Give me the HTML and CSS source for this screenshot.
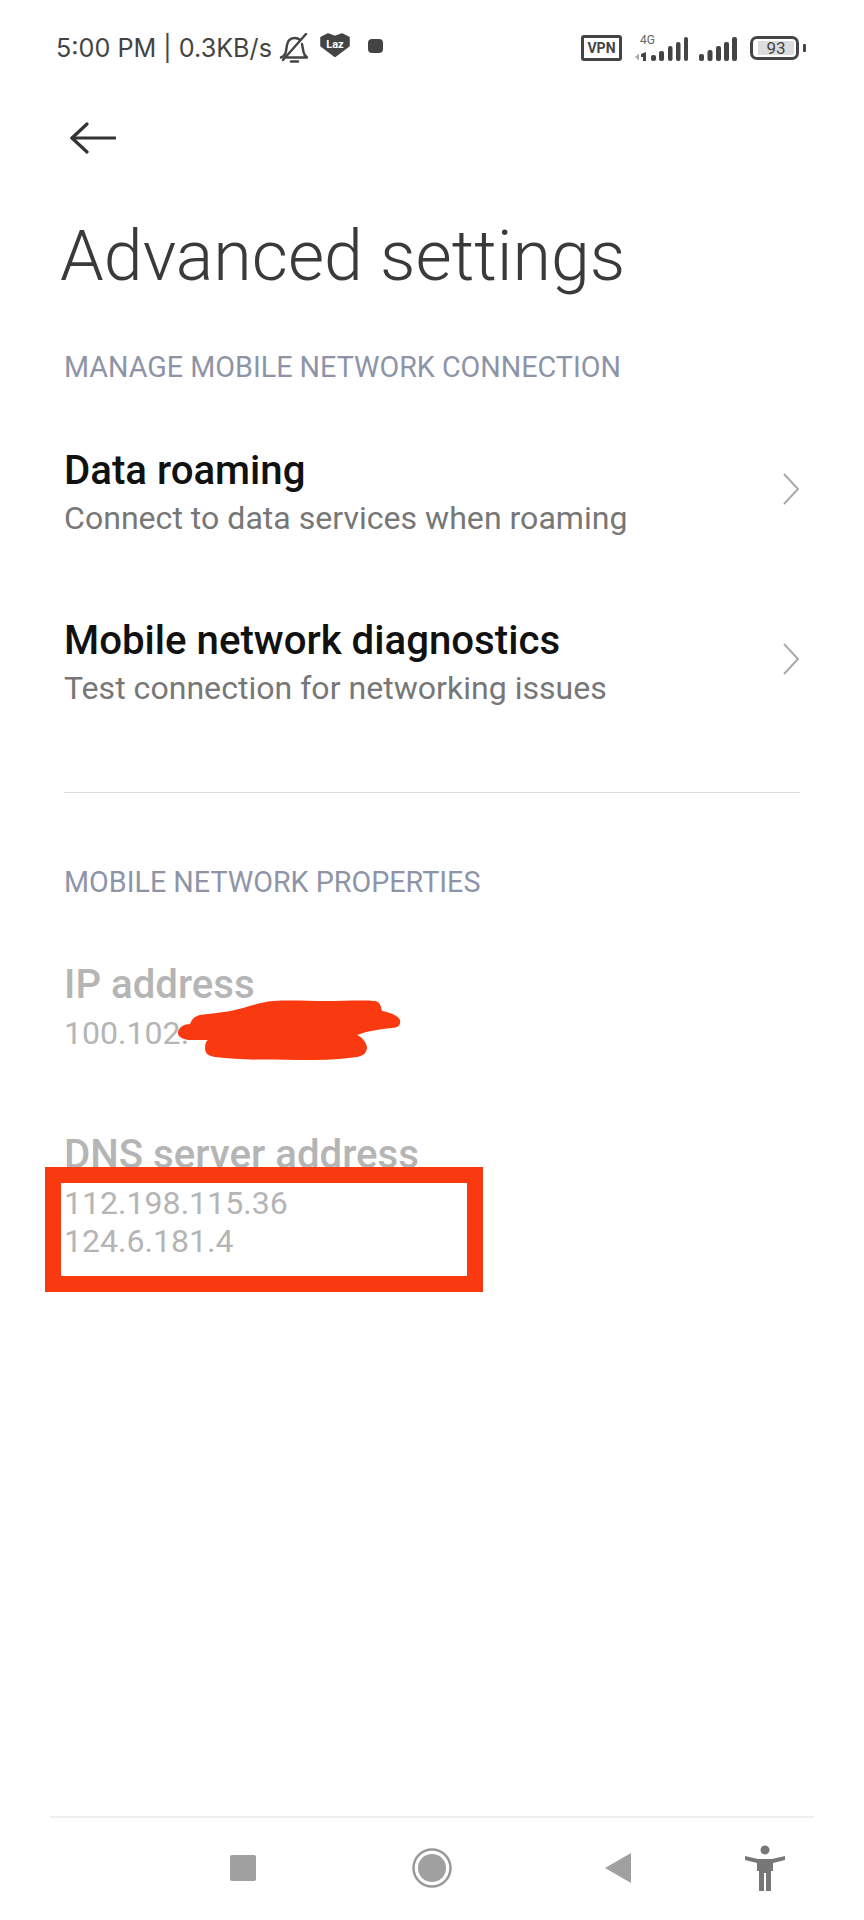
FILE: index.html
```html
<!DOCTYPE html>
<html lang="en">
<head>
  <meta charset="UTF-8">
  <title>Advanced settings</title>
  <link rel="stylesheet" href="styles.css">
</head>
<body>
<div class="screen">

  <div class="status-bar">
    <div class="status-left">
      <span class="status-text">5:00 PM | 0.3KB/s</span>
      <svg class="ic-bell" width="30" height="30" viewBox="0 0 30 30" fill="none" stroke="#444" stroke-width="2.400" stroke-linecap="round" stroke-linejoin="round">
        <path d="M2 24.500c3-1 4.500-3 5-6.500l1-6c.8-4.500 4-7 8-7 2 0 3.500.6 5 1.800"/>
        <path d="M23 11l1.500 8c.4 2 1.500 4 3.500 5.500H8"/>
        <path d="M4 27L27 1"/>
        <path d="M12 28.500h7"/>
      </svg>
      <svg class="ic-laz" width="30" height="24" viewBox="0 0 30 24">
        <path d="M8 1l7 2.500L22 1l7 3.500V13l-14 10.500L1 13V4.500z" fill="#444" stroke="#444" stroke-linejoin="round" stroke-width="1.500"/>
        <text x="15" y="14.500" class="laz-text" text-anchor="middle">Laz</text>
      </svg>
      <span class="ic-dot"></span>
    </div>
    <div class="status-right">
      <span class="vpn">VPN</span>
      <div class="signal-wrap">
        <span class="net-type">4G</span>
        <svg width="53" height="25" viewBox="0 0 53 25" fill="#444">
          <path d="M0 20l4-3.500v7z" fill="#aaa"/>
          <path d="M6 17l5-2v9H8v-4H6z"/>
          <rect x="16" y="18" width="5" height="6" rx="2"/>
          <rect x="24" y="14" width="5" height="10" rx="2"/>
          <rect x="33" y="9" width="4.500" height="15" rx="2"/>
          <rect x="41" y="5" width="4.500" height="19" rx="2"/>
          <rect x="49" y="0" width="4" height="24" rx="2"/>
        </svg>
      </div>
      <svg class="signal-two" width="38" height="25" viewBox="0 0 38 25" fill="#444">
        <rect x="0" y="17" width="5" height="7" rx="2"/>
        <rect x="8.500" y="13" width="5" height="11" rx="2"/>
        <rect x="17" y="9" width="5" height="15" rx="2"/>
        <rect x="25" y="5" width="5" height="19" rx="2"/>
        <rect x="33" y="0" width="5" height="24" rx="2"/>
      </svg>
      <div class="battery"><span class="battery-fill">93</span></div>
      <span class="battery-nub"></span>
    </div>
  </div>

  <svg class="back" width="46" height="32" viewBox="0 0 46 32" fill="none" stroke="#333" stroke-width="3.200" stroke-linecap="round" stroke-linejoin="round">
    <path d="M2 16h43"/>
    <path d="M17 2L2 16l15 14"/>
  </svg>

  <h1 class="page-title">Advanced settings</h1>

  <div class="section-head first">MANAGE MOBILE NETWORK CONNECTION</div>

  <div class="row">
    <div>
      <div class="row-title">Data roaming</div>
      <div class="row-sub">Connect to data services when roaming</div>
    </div>
    <svg class="chevron" width="18" height="32" viewBox="0 0 18 32" fill="none" stroke="#aaa" stroke-width="2"><path d="M2 1l14 15L2 31"/></svg>
  </div>

  <div class="row">
    <div>
      <div class="row-title">Mobile network diagnostics</div>
      <div class="row-sub">Test connection for networking issues</div>
    </div>
    <svg class="chevron" width="18" height="32" viewBox="0 0 18 32" fill="none" stroke="#aaa" stroke-width="2"><path d="M2 1l14 15L2 31"/></svg>
  </div>

  <div class="divider"></div>

  <div class="section-head">MOBILE NETWORK PROPERTIES</div>

  <div class="row disabled">
    <div>
      <div class="row-title">IP address</div>
      <div class="row-sub">100.102.</div>
    </div>
  </div>

  <div class="row disabled">
    <div>
      <div class="row-title">DNS server address</div>
      <div class="row-sub">112.198.115.36<br>124.6.181.4</div>
    </div>
  </div>

  <!-- red marks drawn over the screenshot -->
  <svg class="scribble" width="230" height="66" viewBox="0 0 230 66" fill="#f93a10">
    <path d="M3 34c1-5 6-8 12-8 2-5 5-8 10-9 14-2 30-3 43-7 10-3 20-6 30-7 17-1 35 0 52 0 18 0 38-1 50 0 5 1 6 5 7 10 5 1 15 3 18 9 1 5-2 8-8 8-13 1-24 3-35 7 5 2 9 7 10 12 0 6-4 9-10 10-20 3-40 3-60 3-29 0-58 0-82-3-6-1-10-3-10-9 0-4 1-7 3-8-7 0-14 0-20 0-6-1-11-4-10-8z"/>
  </svg>
  <div class="red-box"></div>

  <div class="nav-bar">
    <span class="nav-square"></span>
    <svg class="nav-home" width="40" height="40" viewBox="0 0 40 40"><circle cx="20" cy="20" r="18.500" fill="none" stroke="#999" stroke-width="2.500"/><circle cx="20" cy="20" r="14" fill="#a0a0a0"/></svg>
    <svg class="nav-back" width="26" height="30" viewBox="0 0 26 30"><path d="M26 0v30L0 15z" fill="#a0a0a0"/></svg>
    <svg class="nav-person" width="40" height="46" viewBox="0 0 40 46" fill="#777">
      <circle cx="20" cy="5" r="4.500"/>
      <path d="M0 11l13 3h14l13-3 .5 4-12.500 3v8h-2v20h-5V28h-2v18h-5V26h-2v-8L0 15z"/>
    </svg>
  </div>
</div>
</body>
</html>
```

FILE: styles.css
```css
* {
  box-sizing: border-box;
}

body {
  margin: 0;
  background: #fff;
  font-family: Roboto, "Liberation Sans", sans-serif;
}

.screen {
  position: relative;
  display: flex;
  flex-direction: column;
  height: 1920px;
  overflow: hidden;
}

.status-bar {
  display: flex;
  justify-content: space-between;
  align-items: center;
  height: 30px;
  margin-top: 33px;
  padding: 0 58px 0 56px;
}

.status-left,
.status-right {
  display: flex;
  align-items: center;
}

.status-text {
  font-family: Inter, Roboto, sans-serif;
  font-size: 25.200px;
  color: #444;
  white-space: nowrap;
}

.ic-bell {
  margin-left: 7px;
}

.ic-laz {
  margin-left: 11px;
  margin-top: -6px;
}

.laz-text {
  font-family: Roboto, sans-serif;
  font-size: 11px;
  font-weight: 700;
  fill: #fff;
}

.ic-dot {
  width: 15px;
  height: 14px;
  margin-left: 18px;
  margin-top: -4px;
  border-radius: 4px;
  background: #444;
}

.vpn {
  width: 41px;
  height: 26px;
  border: 3px solid #444;
  border-radius: 3px;
  font-size: 14px;
  font-weight: 700;
  line-height: 20px;
  text-align: center;
  color: #444;
}

.signal-wrap {
  position: relative;
  margin-left: 13px;
  margin-top: 2px;
}

.signal-wrap svg {
  display: block;
}

.net-type {
  position: absolute;
  left: 5px;
  top: -4px;
  font-size: 12px;
  color: #666;
}

.signal-two {
  margin-left: 11px;
  margin-top: 2px;
}

.battery {
  display: flex;
  align-items: center;
  width: 49px;
  height: 24px;
  margin-left: 13px;
  padding: 2px;
  border: 3px solid #444;
  border-radius: 7px;
}

.battery-fill {
  width: 37px;
  height: 14px;
  margin-left: 3px;
  background: #ddd;
  font-size: 17px;
  line-height: 14px;
  text-align: center;
  color: #444;
}

.battery-nub {
  width: 3px;
  height: 8px;
  margin-left: 4px;
  border-radius: 1px;
  background: #444;
}

.back {
  flex: none;
  margin: 59px 0 0 70px;
}

.page-title {
  margin: 59px 0 0 60px;
  font-size: 70px;
  font-weight: 300;
  line-height: 86px;
  color: #3a3a3a;
  white-space: nowrap;
}

.section-head {
  margin: 0 0 0 64px;
  height: 36px;
  font-size: 28.700px;
  line-height: 36px;
  color: #8e94a8;
}

.section-head.first {
  margin-top: 50px;
}

.row {
  display: flex;
  justify-content: space-between;
  align-items: center;
  height: 170px;
  padding: 0 64px;
  flex: none;
}

.section-head + .row {
  margin-top: 22px;
}

.chevron {
  margin-top: -7px;
}

.row-title {
  font-size: 40.200px;
  font-weight: 500;
  line-height: 46px;
  color: #111;
  white-space: nowrap;
}

.row-sub {
  margin-top: 5px;
  font-size: 32.100px;
  line-height: 38px;
  color: #777;
  white-space: nowrap;
}

.row.disabled {
  align-items: flex-start;
  padding-top: 40px;
}

.row.disabled .row-title {
  color: #b5b5b5;
}

.row.disabled .row-sub {
  margin-top: 6px;
  color: #b5b5b5;
}

.divider {
  height: 1px;
  margin: 45px 64px 0;
  background: #ddd;
  flex: none;
}

.divider + .section-head {
  margin-top: 71px;
}

.scribble {
  position: absolute;
  left: 175px;
  top: 998px;
}

.red-box {
  position: absolute;
  left: 45px;
  top: 1167px;
  width: 438px;
  height: 125px;
  border: 16px solid #f93a10;
}

.nav-bar {
  position: absolute;
  left: 50px;
  right: 50px;
  bottom: 0;
  height: 104px;
  border-top: 2px solid #eee;
}

.nav-square {
  position: absolute;
  left: 180px;
  top: 37px;
  width: 26px;
  height: 26px;
  border-radius: 2px;
  background: #a0a0a0;
}

.nav-home {
  position: absolute;
  left: 362px;
  top: 30px;
}

.nav-back {
  position: absolute;
  left: 555px;
  top: 35px;
}

.nav-person {
  position: absolute;
  left: 695px;
  top: 27px;
}
```
